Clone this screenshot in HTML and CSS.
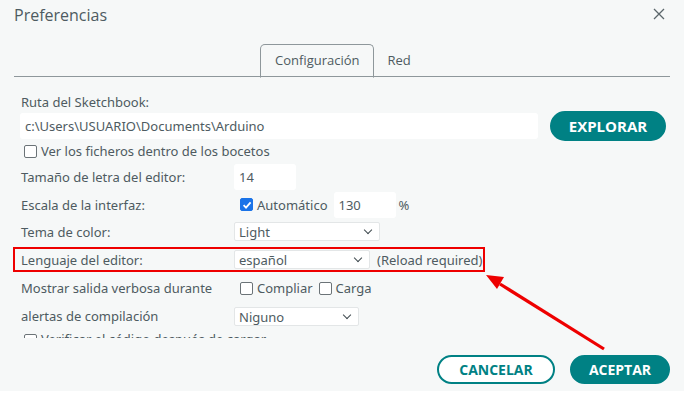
FILE: index.html
```html
<!DOCTYPE html>
<html lang="es">
<head>
  <meta charset="UTF-8">
  <title>Preferencias</title>
  <link rel="stylesheet" href="styles.css">
</head>
<body>

<div class="dialog">
  <div class="header">
    <h1>Preferencias</h1>
    <svg class="close" width="12" height="12" viewBox="0 0 12 12">
      <path d="M1 1 L11 11 M11 1 L1 11" stroke="#5b666b" stroke-width="1.3" fill="none"/>
    </svg>
  </div>

  <div class="tabs">
    <div class="tab active">Configuración</div>
    <div class="tab">Red</div>
  </div>

  <div class="content">
    <div class="label top">Ruta del Sketchbook:</div>
    <div class="path-row">
      <div class="field path">c:\Users\USUARIO\Documents\Arduino</div>
      <button class="btn filled explore">EXPLORAR</button>
    </div>
    <div class="check-row">
      <span class="box"></span>Ver los ficheros dentro de los bocetos
    </div>

    <div class="row r-font">
      <div class="label">Tamaño de letra del editor:</div>
      <div class="field small">14</div>
    </div>

    <div class="row r-scale">
      <div class="label">Escala de la interfaz:</div>
      <span class="box checked">
        <svg width="10" height="10" viewBox="0 0 10 10"><path d="M1.6 5.2 L4 7.6 L8.6 2.4" stroke="#fff" stroke-width="1.8" fill="none"/></svg>
      </span>
      <span class="opt">Automático</span>
      <div class="field small">130</div>
      <span class="unit">%</span>
    </div>

    <div class="row r-theme">
      <div class="label">Tema de color:</div>
      <div class="select w-theme">Light<span class="chev"></span></div>
    </div>

    <div class="row r-lang highlight">
      <div class="label">Lenguaje del editor:</div>
      <div class="select w-lang">español<span class="chev"></span></div>
      <span class="note">(Reload required)</span>
    </div>

    <div class="row r-verbose">
      <div class="label">Mostrar salida verbosa durante</div>
      <span class="box"></span><span class="opt">Compliar</span>
      <span class="box"></span><span class="opt">Carga</span>
    </div>

    <div class="row r-warn">
      <div class="label">alertas de compilación</div>
      <div class="select w-warn">Niguno<span class="chev"></span></div>
    </div>

    <div class="check-row cut">
      <span class="box"></span>Verificar el código después de cargar
    </div>
  </div>

  <div class="footer">
    <button class="btn outline">CANCELAR</button>
    <button class="btn filled">ACEPTAR</button>
  </div>

  <svg class="arrow" width="687" height="399" viewBox="0 0 687 399">
    <line x1="604" y1="349" x2="500" y2="284" stroke="#ee0000" stroke-width="3.2"/>
    <polygon points="486,275 504,277 497,289" fill="#ee0000"/>
  </svg>
</div>

</body>
</html>
```

FILE: styles.css
```css
body {
  margin: 0;
  background-color: #ffffff;
  font-family: "Noto Sans", sans-serif;
  color: #4e5b61;
}
.dialog {
  position: relative;
  width: 684px;
  height: 391px;
  background-color: #f6f8f8;
}
.header {
  display: flex;
  justify-content: space-between;
  align-items: center;
  height: 30px;
  padding: 0 19px 0 14px;
}
.header h1 {
  margin: 0;
  font-family: "Open Sans", sans-serif;
  font-weight: 400;
  font-size: 16px;
  color: #4e5b61;
}
.close {
  margin-top: -2px;
}
.tabs {
  display: flex;
  margin: 14px 14px 0;
  padding-left: 246px;
  border-bottom: 1px solid #8e979b;
  height: 32px;
  font-family: "Open Sans", sans-serif;
  font-size: 13px;
}
.tab {
  padding: 0 13px 0 14px;
  line-height: 32px;
  color: #4e5b61;
}
.tab.active {
  border: 1px solid #8e979b;
  border-bottom: 1px solid #f6f8f8;
  border-radius: 5px 5px 0 0;
  height: 32px;
  line-height: 31px;
  margin-bottom: -1px;
}
.content {
  height: 261px;
  overflow: hidden;
  padding-left: 20px;
  font-size: 13px;
}
.label {
  width: 213px;
  flex: none;
  padding-left: 1px;
}
.label.top {
  margin-top: 15px;
  line-height: 20px;
}
.path-row {
  display: flex;
  align-items: center;
  height: 27px;
}
.field {
  background-color: #ffffff;
  border-radius: 3px;
  height: 26px;
  line-height: 26px;
  padding-left: 5px;
  box-sizing: border-box;
}
.path {
  width: 518px;
}
.small {
  width: 62px;
}
.btn {
  font-family: "Open Sans", sans-serif;
  font-weight: 700;
  font-size: 14px;
  border-radius: 16px;
  box-sizing: border-box;
  height: 29px;
  cursor: pointer;
}
.filled {
  background-color: #008184;
  color: #ffffff;
  border: 2px solid #008184;
}
.outline {
  background-color: #ffffff;
  color: #008184;
  border: 2px solid #008184;
}
.explore {
  margin-left: 12px;
  width: 116px;
  height: 30px;
  font-size: 15px;
}
.check-row {
  display: flex;
  align-items: center;
  height: 24px;
  padding-left: 4px;
}
.box {
  width: 11px;
  height: 11px;
  border: 1px solid #6b7377;
  border-radius: 2px;
  background-color: #ffffff;
  margin-right: 4px;
  flex: none;
  display: inline-flex;
  align-items: center;
  justify-content: center;
}
.box.checked {
  background-color: #1a73e8;
  border-color: #1a73e8;
  margin-left: 6px;
}
.row {
  display: flex;
  align-items: center;
  height: 27px;
  white-space: nowrap;
}
.r-font { height: 28px; }
.r-verbose { height: 28px; }
.r-warn { height: 28px; }
.opt {
  margin-right: 6px;
}
.r-verbose .box:first-of-type {
  margin-left: 6px;
}
.unit {
  margin-left: 3px;
}
.select {
  position: relative;
  background-color: #ffffff;
  border: 1px solid #e3e6e7;
  border-radius: 2px;
  height: 19px;
  line-height: 18px;
  padding-left: 4px;
  box-sizing: border-box;
}
.chev {
  position: absolute;
  right: 8px;
  top: 4px;
  width: 5px;
  height: 5px;
  border-right: 1.6px solid #3f4a4f;
  border-bottom: 1.6px solid #3f4a4f;
  transform: rotate(45deg);
}
.w-theme { width: 146px; }
.w-lang { width: 136px; }
.w-warn { width: 125px; }
.highlight {
  margin-left: -7px;
  padding-left: 5px;
  width: 472px;
  border: 2px solid #ee0000;
  box-sizing: border-box;
  height: 25px;
  margin-top: 2px;
  margin-bottom: 2px;
}
.note {
  margin-left: 7px;
  flex: none;
}
.cut {
  height: 18px;
  align-items: flex-start;
  line-height: 18px;
}
.cut .box {
  margin-top: 4px;
}
.footer {
  display: flex;
  justify-content: flex-end;
  gap: 15px;
  padding: 17px 14px 0 0;
}
.footer .outline {
  width: 118px;
}
.footer .filled {
  width: 100px;
}
.arrow {
  position: absolute;
  left: 0;
  top: 0;
  pointer-events: none;
}
```
